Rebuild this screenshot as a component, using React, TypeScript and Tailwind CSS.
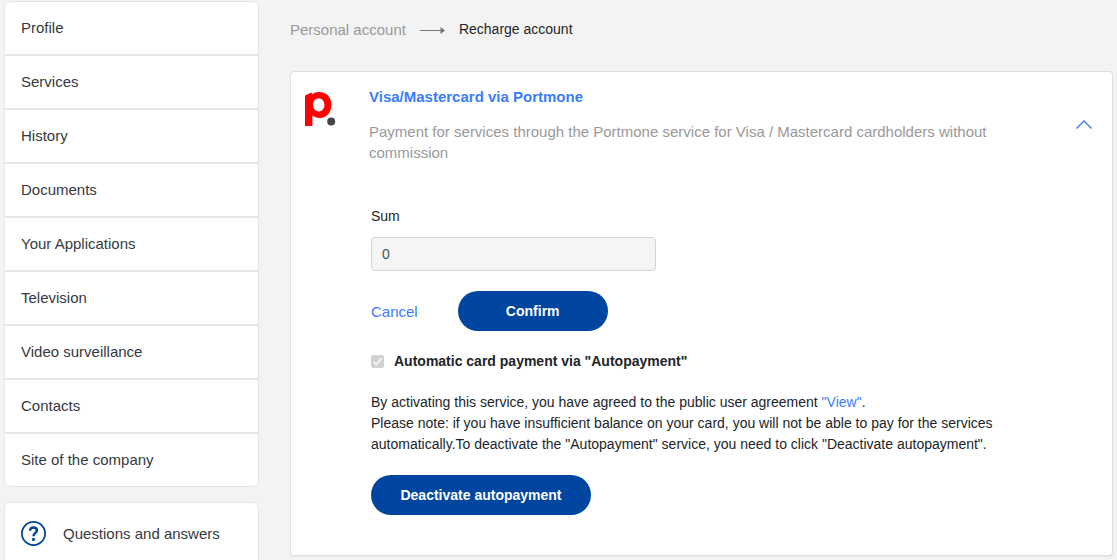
import { useState } from "react";

const menu = [
  "Profile",
  "Services",
  "History",
  "Documents",
  "Your Applications",
  "Television",
  "Video surveillance",
  "Contacts",
  "Site of the company",
];

function PortmoneLogo() {
  return (
    <svg viewBox="0 0 31 35" className="w-[31px] h-[35px]" aria-hidden="true">
      <path
        d="M0 3.4 L6.4 0.6 L7.2 2.2 C9 0.8 11.4 0 14.2 0 C21.6 0 26.4 5.4 26.4 12.8 C26.4 20.4 21.8 26 14.8 26 C11.8 26 9.2 25.2 7.4 23.6 V34 H0 Z M13.8 6.4 C10.4 6.4 8 9 8 12.8 C8 16.8 10.4 19.4 13.8 19.4 C17.2 19.4 19.4 16.8 19.4 12.8 C19.4 9 17.2 6.4 13.8 6.4 Z"
        fill="#fe0000"
        fillRule="evenodd"
      />
      <circle cx="26.2" cy="29.4" r="4" fill="#434548" />
    </svg>
  );
}

function QuestionIcon() {
  return (
    <svg viewBox="0 0 26 26" className="size-[26px] shrink-0" fill="none" stroke="#00459f" aria-hidden="true">
      <circle cx="12.5" cy="12.5" r="11.6" strokeWidth="1.8" />
      <path d="M9.1 9.8 C9.1 7.4 10.5 6.5 12.5 6.5 C14.6 6.5 15.9 7.6 15.9 9.4 C15.9 11.8 12.5 12 12.5 15.2" strokeWidth="2.5" />
      <circle cx="12.5" cy="18.4" r="1.6" fill="#00459f" stroke="none" />
    </svg>
  );
}

function Sidebar() {
  return (
    <aside className="w-[255px] shrink-0 pt-px text-[15px] text-[#343a40]">
      <nav>
        <ul className="rounded-md border border-[#e6e6e6] bg-white divide-y-2 divide-[#e6e6e6]">
          {menu.map((item) => (
            <li key={item}>
              <a href="#" className="flex h-[52px] items-center px-4">{item}</a>
            </li>
          ))}
        </ul>
      </nav>
      <a href="#" className="mt-[15px] flex items-center gap-4 rounded-md border border-[#e6e6e6] bg-white px-4 py-[18px]">
        <QuestionIcon />
        Questions and answers
      </a>
    </aside>
  );
}

function Breadcrumbs() {
  return (
    <nav className="flex h-[71px] items-start gap-[14px] pt-[19px] leading-[21px]">
      <a href="#" className="text-[15px] text-[#999]">Personal account</a>
      <svg viewBox="0 0 25 7" className="mt-2 w-[25px] h-[7px]" aria-hidden="true">
        <path d="M0 3.5 H21" stroke="#777" />
        <path d="M20.5 0 L25 3.5 L20.5 7 Z" fill="#777" />
      </svg>
      <span>Recharge account</span>
    </nav>
  );
}

export default function App() {
  const [open, setOpen] = useState(true);

  return (
    <div className="flex h-screen gap-[31px] overflow-x-hidden overflow-y-auto bg-[#f3f3f3] px-1 font-['Liberation_Sans',Arial,sans-serif] text-sm text-[#212529] [scrollbar-width:none]">
      <Sidebar />
      <main className="min-w-0 flex-1">
        <Breadcrumbs />
        <section className="rounded border border-[#dfdfdf] bg-white shadow-xs">
          <header className="flex items-center px-[14px] pt-[14px] leading-[21px]">
            <div className="w-16 shrink-0 self-start pt-[6px]">
              <PortmoneLogo />
            </div>
            <div className="flex-1 text-[15px]">
              <h2 className="font-bold text-[#3b7cff]">Visa/Mastercard via Portmone</h2>
              <p className="mt-[14px] max-w-[650px] text-[#999]">
                Payment for services through the Portmone service for Visa / Mastercard cardholders without commission
              </p>
            </div>
            <button type="button" aria-label="Toggle payment form" onClick={() => setOpen(!open)} className="p-[6px]">
              <svg viewBox="0 0 16 9" className="w-4 h-[9px]" fill="none" stroke="#3b7cff" strokeWidth="1.4">
                <path d={open ? "M0.5 8.5 L8 1 L15.5 8.5" : "M0.5 0.5 L8 8 L15.5 0.5"} />
              </svg>
            </button>
          </header>
          {open && (
            <form className="flex flex-col gap-5 pt-[43px] pr-4 pb-10 pl-20 leading-[21px]" onSubmit={(e) => e.preventDefault()}>
              <div className="flex flex-col gap-[10px]">
                <label htmlFor="sum">Sum</label>
                <input
                  id="sum"
                  type="text"
                  defaultValue="0"
                  className="h-[34px] w-full max-w-[285px] rounded border border-[#ced4da] bg-[#f5f5f5] px-[10px] text-[#495057]"
                />
              </div>
              <div className="flex items-center gap-10">
                <button type="button" className="text-[15px] text-[#3b7cff]">Cancel</button>
                <button type="submit" className="h-10 w-[150px] rounded-full bg-[#00459f] font-bold text-white">Confirm</button>
              </div>
              <div className="flex items-center gap-[10px]">
                <span className="grid size-[13px]">
                  <input
                    id="autopay"
                    type="checkbox"
                    defaultChecked
                    disabled
                    className="col-start-1 row-start-1 size-[13px] appearance-none rounded-xs bg-[#d1d1d1]"
                  />
                  <svg viewBox="0 0 13 13" className="pointer-events-none col-start-1 row-start-1 size-[13px]" fill="none" stroke="#f6f6f6" strokeWidth="1.8">
                    <path d="M2.5 6.8 L5.2 9.5 L10.5 3.4" />
                  </svg>
                </span>
                <label htmlFor="autopay" className="font-bold">Automatic card payment via "Autopayment"</label>
              </div>
              <p className="max-w-[640px]">
                By activating this service, you have agreed to the public user agreement{" "}
                <a href="#" className="text-[#3b7cff]">"View"</a>.
                <br />
                Please note: if you have insufficient balance on your card, you will not be able to pay for the services
                automatically.To deactivate the "Autopayment" service, you need to click "Deactivate autopayment".
              </p>
              <button type="button" className="h-10 w-[220px] rounded-full bg-[#00459f] font-bold text-white">Deactivate autopayment</button>
            </form>
          )}
        </section>
      </main>
    </div>
  );
}
